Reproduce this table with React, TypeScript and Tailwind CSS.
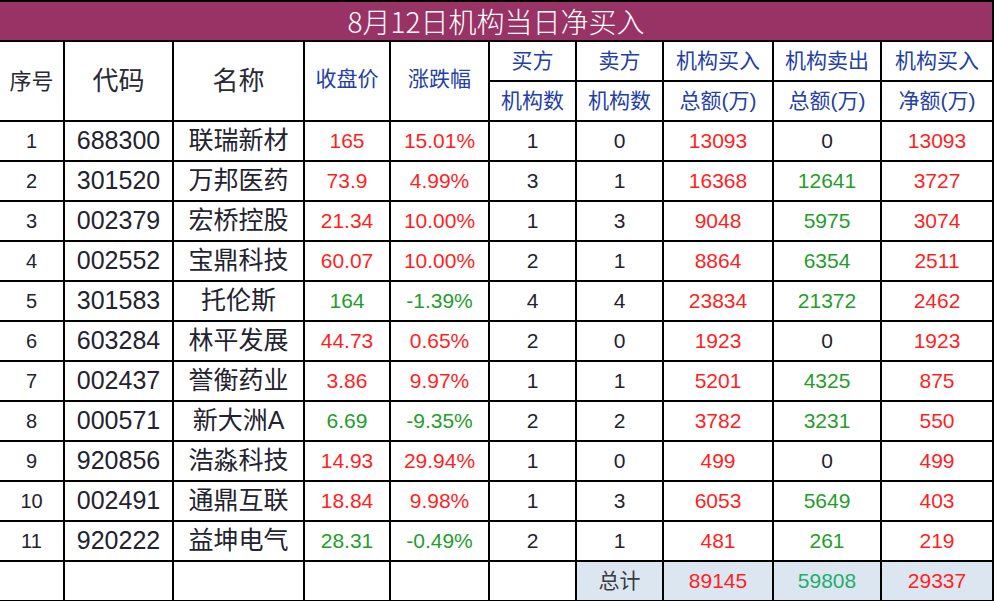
import React from 'react';

type Tone = 'r' | 'g' | 'd';

const rows: [string, string, string, [string, Tone], [string, Tone], string, string, [string, Tone], [string, Tone], [string, Tone]][] = [
  ['1', '688300', '联瑞新材', ['165', 'r'], ['15.01%', 'r'], '1', '0', ['13093', 'r'], ['0', 'd'], ['13093', 'r']],
  ['2', '301520', '万邦医药', ['73.9', 'r'], ['4.99%', 'r'], '3', '1', ['16368', 'r'], ['12641', 'g'], ['3727', 'r']],
  ['3', '002379', '宏桥控股', ['21.34', 'r'], ['10.00%', 'r'], '1', '3', ['9048', 'r'], ['5975', 'g'], ['3074', 'r']],
  ['4', '002552', '宝鼎科技', ['60.07', 'r'], ['10.00%', 'r'], '2', '1', ['8864', 'r'], ['6354', 'g'], ['2511', 'r']],
  ['5', '301583', '托伦斯', ['164', 'g'], ['-1.39%', 'g'], '4', '4', ['23834', 'r'], ['21372', 'g'], ['2462', 'r']],
  ['6', '603284', '林平发展', ['44.73', 'r'], ['0.65%', 'r'], '2', '0', ['1923', 'r'], ['0', 'd'], ['1923', 'r']],
  ['7', '002437', '誉衡药业', ['3.86', 'r'], ['9.97%', 'r'], '1', '1', ['5201', 'r'], ['4325', 'g'], ['875', 'r']],
  ['8', '000571', '新大洲A', ['6.69', 'g'], ['-9.35%', 'g'], '2', '2', ['3782', 'r'], ['3231', 'g'], ['550', 'r']],
  ['9', '920856', '浩淼科技', ['14.93', 'r'], ['29.94%', 'r'], '1', '0', ['499', 'r'], ['0', 'd'], ['499', 'r']],
  ['10', '002491', '通鼎互联', ['18.84', 'r'], ['9.98%', 'r'], '1', '3', ['6053', 'r'], ['5649', 'g'], ['403', 'r']],
  ['11', '920222', '益坤电气', ['28.31', 'g'], ['-0.49%', 'g'], '2', '1', ['481', 'r'], ['261', 'g'], ['219', 'r']],
];

const tone = (t: Tone) =>
  t === 'r' ? 'text-[#ff1f1f]' : t === 'g' ? 'text-[#1f9e2a]' : 'text-[#23232f]';

const Cell = ({
  children,
  className = '',
  bg = 'bg-white',
}: {
  children?: React.ReactNode;
  className?: string;
  bg?: string;
}) => (
  <div className={`flex items-center justify-center whitespace-nowrap ${bg} ${className}`}>{children}</div>
);

export default function App() {
  return (
    <div className="w-[994px] h-[601px] bg-black font-['Liberation_Sans','Noto_Sans_CJK_SC',sans-serif] grid grid-cols-[63px_107px_129px_84px_97px_85px_85px_108px_106px_110px] grid-rows-[repeat(15,38px)] gap-[2px] pt-[2px] pr-[2px] pb-px">
      <div className="col-span-10 flex items-center justify-center bg-[#993366] text-white text-[28px] font-['Noto_Sans_CJK_SC',sans-serif] font-light">
        8月12日机构当日净买入
      </div>

      <Cell className="row-span-2 text-[22px] text-[#2a2a35]">序号</Cell>
      <Cell className="row-span-2 text-[26px] text-[#2a2a35]">代码</Cell>
      <Cell className="row-span-2 text-[26px] text-[#2a2a35]">名称</Cell>
      <Cell className="row-span-2 text-[21px] text-[#2340a8] pb-1">收盘价</Cell>
      <Cell className="row-span-2 text-[21px] text-[#2340a8] pb-1">涨跌幅</Cell>
      <Cell className="text-[21px] text-[#2340a8]">买方</Cell>
      <Cell className="text-[21px] text-[#2340a8]">卖方</Cell>
      <Cell className="text-[21px] text-[#2340a8]">机构买入</Cell>
      <Cell className="text-[21px] text-[#2340a8]">机构卖出</Cell>
      <Cell className="text-[21px] text-[#2340a8]">机构买入</Cell>
      <Cell className="text-[21px] text-[#2340a8]">机构数</Cell>
      <Cell className="text-[21px] text-[#2340a8]">机构数</Cell>
      <Cell className="text-[21px] text-[#2340a8]">总额(万)</Cell>
      <Cell className="text-[21px] text-[#2340a8]">总额(万)</Cell>
      <Cell className="text-[21px] text-[#2340a8]">净额(万)</Cell>

      {rows.map((r) => (
        <React.Fragment key={r[0]}>
          <Cell className="text-[20px] text-[#23232f]">{r[0]}</Cell>
          <Cell className="text-[25px] text-[#23232f]">{r[1]}</Cell>
          <Cell className="text-[25px] text-[#23232f]">{r[2]}</Cell>
          <Cell className={`text-[21px] ${tone(r[3][1])}`}>{r[3][0]}</Cell>
          <Cell className={`text-[21px] ${tone(r[4][1])}`}>{r[4][0]}</Cell>
          <Cell className="text-[21px] text-[#23232f]">{r[5]}</Cell>
          <Cell className="text-[21px] text-[#23232f]">{r[6]}</Cell>
          <Cell className={`text-[21px] ${tone(r[7][1])}`}>{r[7][0]}</Cell>
          <Cell className={`text-[21px] ${tone(r[8][1])}`}>{r[8][0]}</Cell>
          <Cell className={`text-[21px] ${tone(r[9][1])}`}>{r[9][0]}</Cell>
        </React.Fragment>
      ))}

      <Cell />
      <Cell />
      <Cell />
      <Cell />
      <Cell />
      <Cell />
      <Cell bg="bg-[#dce6f1]" className="text-[21px] text-[#3a3a40]">总计</Cell>
      <Cell bg="bg-[#dce6f1]" className="text-[21px] text-[#ff1f1f]">89145</Cell>
      <Cell bg="bg-[#dce6f1]" className="text-[21px] text-[#1fae6a]">59808</Cell>
      <Cell bg="bg-[#dce6f1]" className="text-[21px] text-[#ff1f1f]">29337</Cell>
    </div>
  );
}
